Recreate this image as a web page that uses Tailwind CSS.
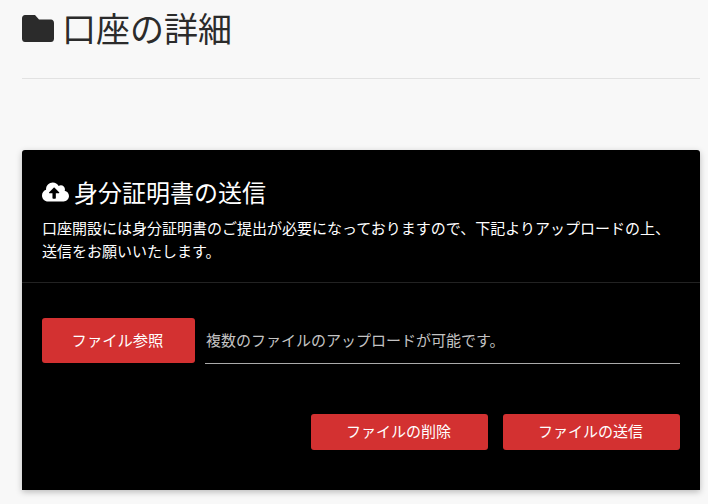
<!DOCTYPE html>
<html lang="ja">
<head>
  <meta charset="UTF-8" />
  <title>口座の詳細</title>
  <script src="https://cdn.jsdelivr.net/npm/@tailwindcss/browser@4"></script>
</head>
<body class="bg-[#f8f8f8] h-[504px] overflow-hidden font-['Noto_Sans_CJK_JP','Noto_Sans',sans-serif]">
  <div class="pl-[22px] pr-[8px]">
    <!-- Title -->
    <header class="h-[79px] border-b border-[#e2e2e2] flex items-start pt-[5px]">
      <h1 class="flex items-center gap-[9px] text-[34px] leading-[46px] font-normal text-[#2b2b2b]">
        <svg class="w-[32px] h-[27px]" viewBox="0 64 512 384" preserveAspectRatio="none" fill="#2b2b2b">
          <path d="M464 128H272l-64-64H48C21.49 64 0 85.49 0 112v288c0 26.51 21.49 48 48 48h416c26.51 0 48-21.49 48-48V176c0-26.51-21.49-48-48-48z"/>
        </svg>
        <span class="-ml-[1px]">口座の詳細</span>
      </h1>
    </header>

    <!-- Card -->
    <section class="mt-[71px] h-[340px] bg-black rounded-t-[3px] shadow-[0_2px_6px_rgba(0,0,0,0.25)] text-white">
      <div class="h-[133px] px-[20px] pt-[26px] border-b border-[#222]">
        <h2 class="flex items-center gap-[5px] text-[24px] leading-[32px] font-normal">
          <svg class="w-[27px] h-[22px]" viewBox="0 32 640 448" fill="#fff">
            <path d="M537.6 226.6c4.1-10.7 6.4-22.4 6.4-34.6 0-53-43-96-96-96-19.7 0-38.1 6-53.3 16.2C367 64.2 315.3 32 256 32c-88.4 0-160 71.6-160 160 0 2.7.1 5.4.2 8.1C40.2 219.8 0 273.2 0 336c0 79.5 64.5 144 144 144h368c70.7 0 128-57.3 128-128 0-61.9-44-113.6-102.4-125.4zM393.4 288H328v112c0 8.8-7.2 16-16 16h-48c-8.8 0-16-7.2-16-16V288h-65.4c-14.3 0-21.4-17.2-11.3-27.3l105.4-105.4c6.2-6.2 16.4-6.2 22.6 0l105.4 105.4c10.1 10.1 2.9 27.3-11.3 27.3z"/>
          </svg>
          身分証明書の送信
        </h2>
        <p class="mt-[8px] text-[15px] leading-[23px] text-white">口座開設には身分証明書のご提出が必要になっておりますので、下記よりアップロードの上、<br>送信をお願いいたします。</p>
      </div>

      <div class="px-[20px] pt-[35px]">
        <div class="flex gap-[10px]">
          <button class="w-[153px] h-[45px] pb-[2px] pr-[2px] bg-[#d33131] rounded-[3px] text-[15.3px] text-white">ファイル参照</button>
          <div class="flex-1 h-[46px] border-b border-[#aaa] flex items-center pl-[1px] text-[15px] text-[#c4c4c4]">複数のファイルのアップロードが可能です。</div>
        </div>
        <div class="mt-[50px] flex justify-end gap-[15px]">
          <button class="w-[177px] h-[36px] pb-[2px] pr-[2px] bg-[#d33131] rounded-[3px] text-[15px] text-white">ファイルの削除</button>
          <button class="w-[177px] h-[36px] pb-[2px] pr-[2px] bg-[#d33131] rounded-[3px] text-[15px] text-white">ファイルの送信</button>
        </div>
      </div>
    </section>
  </div>
</body>
</html>
